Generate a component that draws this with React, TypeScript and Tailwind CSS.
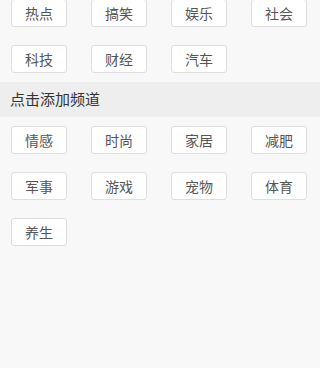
const myChannels = ['热点', '搞笑', '娱乐', '社会', '科技', '财经', '汽车']
const moreChannels = ['情感', '时尚', '家居', '减肥', '军事', '游戏', '宠物', '体育', '养生']

function ChannelGrid({ items }: { items: string[] }) {
  return (
    <div className="grid grid-cols-[repeat(4,56px)] gap-x-6 gap-y-[18px] px-[11px] py-[9px]">
      {items.map((name) => (
        <div
          key={name}
          className="flex h-[28px] items-center justify-center rounded-[3px] border border-[#dedede] bg-white text-[14px] text-[#555]"
        >
          {name}
        </div>
      ))}
    </div>
  )
}

export default function App() {
  return (
    <div
      className="h-[368px] w-[320px] overflow-hidden bg-[#f8f8f8]"
      style={{ fontFamily: '"Noto Sans CJK SC", "Noto Sans", sans-serif' }}
    >
      <div className="-mt-[10px]">
        <ChannelGrid items={myChannels} />
      </div>
      <div className="flex h-[35px] items-center bg-[#eeeeee] px-[10px] text-[15px] text-[#333]">
        点击添加频道
      </div>
      <ChannelGrid items={moreChannels} />
    </div>
  )
}
